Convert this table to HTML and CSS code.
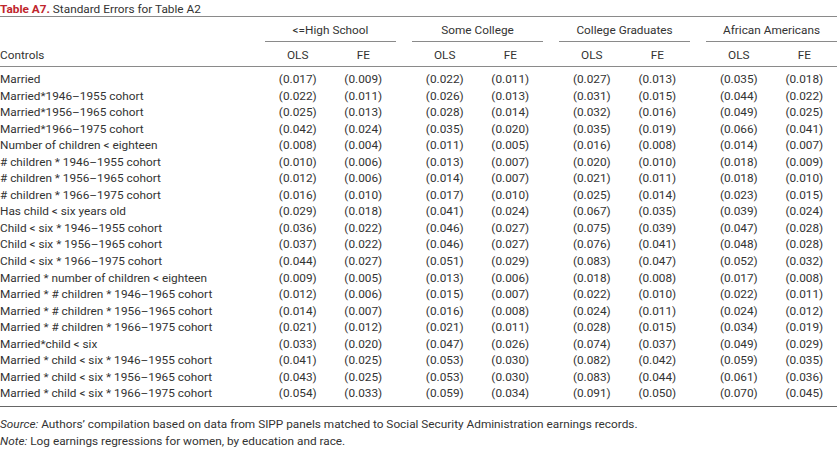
FILE: index.html
```html
<!DOCTYPE html>
<html>
<head>
<meta charset="utf-8">
<link rel="stylesheet" href="styles.css">
</head>
<body>
<div class="wrap">
  <div class="title"><span class="label">Table A7.</span> Standard Errors for Table A2</div>
  <table class="tbl">
    <colgroup>
      <col class="c-label">
      <col class="c-num"><col class="c-num"><col class="c-gap">
      <col class="c-num"><col class="c-num"><col class="c-gap">
      <col class="c-num"><col class="c-num"><col class="c-gap">
      <col class="c-num"><col class="c-num">
    </colgroup>
    <thead>
      <tr class="groups">
        <th></th>
        <th colspan="2"><span class="grp">&lt;=High School</span></th><th class="gap"></th>
        <th colspan="2"><span class="grp">Some College</span></th><th class="gap"></th>
        <th colspan="2"><span class="grp">College Graduates</span></th><th class="gap"></th>
        <th colspan="2"><span class="grp">African Americans</span></th>
      </tr>
      <tr class="cols">
        <th class="lbl">Controls</th>
        <th>OLS</th><th>FE</th><th></th>
        <th>OLS</th><th>FE</th><th></th>
        <th>OLS</th><th>FE</th><th></th>
        <th>OLS</th><th>FE</th>
      </tr>
    </thead>
    <tbody>
      <tr class="first"><td class="lbl">Married</td><td>(0.017)</td><td>(0.009)</td><td></td><td>(0.022)</td><td>(0.011)</td><td></td><td>(0.027)</td><td>(0.013)</td><td></td><td>(0.035)</td><td>(0.018)</td></tr>
      <tr><td class="lbl">Married*1946–1955 cohort</td><td>(0.022)</td><td>(0.011)</td><td></td><td>(0.026)</td><td>(0.013)</td><td></td><td>(0.031)</td><td>(0.015)</td><td></td><td>(0.044)</td><td>(0.022)</td></tr>
      <tr><td class="lbl">Married*1956–1965 cohort</td><td>(0.025)</td><td>(0.013)</td><td></td><td>(0.028)</td><td>(0.014)</td><td></td><td>(0.032)</td><td>(0.016)</td><td></td><td>(0.049)</td><td>(0.025)</td></tr>
      <tr><td class="lbl">Married*1966–1975 cohort</td><td>(0.042)</td><td>(0.024)</td><td></td><td>(0.035)</td><td>(0.020)</td><td></td><td>(0.035)</td><td>(0.019)</td><td></td><td>(0.066)</td><td>(0.041)</td></tr>
      <tr><td class="lbl">Number of children &lt; eighteen</td><td>(0.008)</td><td>(0.004)</td><td></td><td>(0.011)</td><td>(0.005)</td><td></td><td>(0.016)</td><td>(0.008)</td><td></td><td>(0.014)</td><td>(0.007)</td></tr>
      <tr><td class="lbl"># children * 1946–1955 cohort</td><td>(0.010)</td><td>(0.006)</td><td></td><td>(0.013)</td><td>(0.007)</td><td></td><td>(0.020)</td><td>(0.010)</td><td></td><td>(0.018)</td><td>(0.009)</td></tr>
      <tr><td class="lbl"># children * 1956–1965 cohort</td><td>(0.012)</td><td>(0.006)</td><td></td><td>(0.014)</td><td>(0.007)</td><td></td><td>(0.021)</td><td>(0.011)</td><td></td><td>(0.018)</td><td>(0.010)</td></tr>
      <tr><td class="lbl"># children * 1966–1975 cohort</td><td>(0.016)</td><td>(0.010)</td><td></td><td>(0.017)</td><td>(0.010)</td><td></td><td>(0.025)</td><td>(0.014)</td><td></td><td>(0.023)</td><td>(0.015)</td></tr>
      <tr><td class="lbl">Has child &lt; six years old</td><td>(0.029)</td><td>(0.018)</td><td></td><td>(0.041)</td><td>(0.024)</td><td></td><td>(0.067)</td><td>(0.035)</td><td></td><td>(0.039)</td><td>(0.024)</td></tr>
      <tr><td class="lbl">Child &lt; six * 1946–1955 cohort</td><td>(0.036)</td><td>(0.022)</td><td></td><td>(0.046)</td><td>(0.027)</td><td></td><td>(0.075)</td><td>(0.039)</td><td></td><td>(0.047)</td><td>(0.028)</td></tr>
      <tr><td class="lbl">Child &lt; six * 1956–1965 cohort</td><td>(0.037)</td><td>(0.022)</td><td></td><td>(0.046)</td><td>(0.027)</td><td></td><td>(0.076)</td><td>(0.041)</td><td></td><td>(0.048)</td><td>(0.028)</td></tr>
      <tr><td class="lbl">Child &lt; six * 1966–1975 cohort</td><td>(0.044)</td><td>(0.027)</td><td></td><td>(0.051)</td><td>(0.029)</td><td></td><td>(0.083)</td><td>(0.047)</td><td></td><td>(0.052)</td><td>(0.032)</td></tr>
      <tr><td class="lbl">Married * number of children &lt; eighteen</td><td>(0.009)</td><td>(0.005)</td><td></td><td>(0.013)</td><td>(0.006)</td><td></td><td>(0.018)</td><td>(0.008)</td><td></td><td>(0.017)</td><td>(0.008)</td></tr>
      <tr><td class="lbl">Married * # children * 1946–1965 cohort</td><td>(0.012)</td><td>(0.006)</td><td></td><td>(0.015)</td><td>(0.007)</td><td></td><td>(0.022)</td><td>(0.010)</td><td></td><td>(0.022)</td><td>(0.011)</td></tr>
      <tr><td class="lbl">Married * # children * 1956–1965 cohort</td><td>(0.014)</td><td>(0.007)</td><td></td><td>(0.016)</td><td>(0.008)</td><td></td><td>(0.024)</td><td>(0.011)</td><td></td><td>(0.024)</td><td>(0.012)</td></tr>
      <tr><td class="lbl">Married * # children * 1966–1975 cohort</td><td>(0.021)</td><td>(0.012)</td><td></td><td>(0.021)</td><td>(0.011)</td><td></td><td>(0.028)</td><td>(0.015)</td><td></td><td>(0.034)</td><td>(0.019)</td></tr>
      <tr><td class="lbl">Married*child &lt; six</td><td>(0.033)</td><td>(0.020)</td><td></td><td>(0.047)</td><td>(0.026)</td><td></td><td>(0.074)</td><td>(0.037)</td><td></td><td>(0.049)</td><td>(0.029)</td></tr>
      <tr><td class="lbl">Married * child &lt; six * 1946–1955 cohort</td><td>(0.041)</td><td>(0.025)</td><td></td><td>(0.053)</td><td>(0.030)</td><td></td><td>(0.082)</td><td>(0.042)</td><td></td><td>(0.059)</td><td>(0.035)</td></tr>
      <tr><td class="lbl">Married * child &lt; six * 1956–1965 cohort</td><td>(0.043)</td><td>(0.025)</td><td></td><td>(0.053)</td><td>(0.030)</td><td></td><td>(0.083)</td><td>(0.044)</td><td></td><td>(0.061)</td><td>(0.036)</td></tr>
      <tr class="last"><td class="lbl">Married * child &lt; six * 1966–1975 cohort</td><td>(0.054)</td><td>(0.033)</td><td></td><td>(0.059)</td><td>(0.034)</td><td></td><td>(0.091)</td><td>(0.050)</td><td></td><td>(0.070)</td><td>(0.045)</td></tr>
    </tbody>
  </table>
  <div class="notes">
    <p><em>Source:</em> Authors’ compilation based on data from SIPP panels matched to Social Security Administration earnings records.</p>
    <p><em>Note:</em> Log earnings regressions for women, by education and race.</p>
  </div>
</div>
</body>
</html>
```

FILE: styles.css
```css
html, body {
  margin: 0;
  padding: 0;
  background: #ffffff;
}

.wrap {
  width: 837px;
  font-family: Roboto, "Liberation Sans", Arial, sans-serif;
  font-size: 11.8px;
  color: #333333;
}

.title {
  box-sizing: border-box;
  height: 17px;
  padding-top: 3px;
  line-height: 13px;
  font-size: 11.8px;
  border-bottom: 1px solid #8a8a8a;
}

.title .label {
  color: #c0262d;
  font-weight: bold;
}

.tbl {
  width: 837px;
  border-collapse: collapse;
  table-layout: fixed;
}

.c-label { width: 265px; }
.c-num { width: 65.5px; }
.c-gap { width: 16px; }

.tbl th,
.tbl td {
  padding: 0;
  font-weight: normal;
  text-align: center;
  white-space: nowrap;
}

.tbl .lbl {
  text-align: left;
}

.groups th {
  height: 25px;
  vertical-align: bottom;
}

.groups .grp {
  display: block;
  padding-bottom: 4px;
  line-height: 14px;
  border-bottom: 1px solid #8a8a8a;
}

.cols th {
  height: 23px;
  padding-top: 1px;
  line-height: 14px;
  border-bottom: 1px solid #8a8a8a;
  vertical-align: middle;
}

.tbl td {
  height: 16.55px;
  line-height: 16.55px;
}

.tbl tr.first td {
  padding-top: 4px;
}

.tbl tr.last td {
  padding-bottom: 4px;
  border-bottom: 1px solid #666666;
}

.notes {
  padding-top: 9px;
}

.notes p {
  margin: 0;
  line-height: 17px;
}
```
